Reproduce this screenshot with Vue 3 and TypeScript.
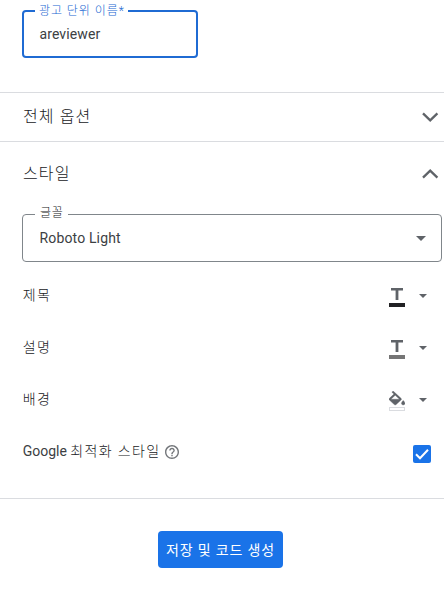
<script setup lang="ts">
import { ref } from 'vue'

interface StyleRow {
  label: string
  kind: 'text' | 'fill'
  color: string
  border: string
}

const unitName = ref('areviewer')
const fontName = ref('Roboto Light')
const optimized = ref(true)
const rows: StyleRow[] = [
  { label: '제목', kind: 'text', color: '#212124', border: '#212124' },
  { label: '설명', kind: 'text', color: '#757575', border: '#757575' },
  { label: '배경', kind: 'fill', color: '#ffffff', border: '#dadce0' },
]
</script>

<template>
  <main class="panel">
    <section class="name-section">
      <div class="field focused">
        <span class="legend"><span class="ko">광고 단위 이름</span><span class="star">*</span></span>
        <span class="value">{{ unitName }}</span>
      </div>
    </section>

    <section class="heading all">
      <h2>전체 옵션</h2>
      <svg class="chev" width="18" height="12" viewBox="0 0 18 12"><path d="M2 2.4 9.2 9.4 16.4 2.4" /></svg>
    </section>

    <section class="style">
      <div class="heading">
        <h2>스타일</h2>
        <svg class="chev" width="18" height="12" viewBox="0 0 18 12"><path d="M2 9.6 9.2 2.6 16.4 9.6" /></svg>
      </div>

      <div class="field select">
        <span class="legend ko">글꼴</span>
        <span class="value">{{ fontName }}</span>
        <svg width="10" height="5" viewBox="0 0 10 5"><path d="M0 0h10L5 5z" fill="#5f6368" /></svg>
      </div>

      <div v-for="row in rows" :key="row.label" class="row">
        <span class="label ko">{{ row.label }}</span>
        <span class="picker">
          <span class="swatch">
            <svg v-if="row.kind === 'text'" width="16" height="15" viewBox="0 0 16 15">
              <path d="M2 0h12v2.4H9.4V12H6.6V2.4H2z" fill="#5f6368" />
            </svg>
            <svg v-else width="16" height="16" viewBox="3 0 18 19.5" preserveAspectRatio="none">
              <path d="M16.56 8.94 7.62 0 6.21 1.41l2.38 2.38-5.15 5.15c-.59.59-.59 1.54 0 2.12l5.5 5.5c.29.29.68.44 1.06.44s.77-.15 1.06-.44l5.5-5.5c.59-.58.59-1.53 0-2.12zM5.21 10 10 5.21 14.79 10zM19 11.5s-2 2.17-2 3.5c0 1.1.9 2 2 2s2-.9 2-2c0-1.33-2-3.5-2-3.5z" fill="#5f6368" stroke="#5f6368" stroke-width=".4" />
            </svg>
            <i class="bar" :style="{ background: row.color, borderColor: row.border }"></i>
          </span>
          <svg width="8" height="4" viewBox="0 0 8 4"><path d="M0 0h8L4 4z" fill="#5f6368" /></svg>
        </span>
      </div>

      <div class="row optimized">
        <span class="label">Google <span class="ko">최적화 스타일</span></span>
        <svg class="help" width="14" height="14" viewBox="2 2 20 20">
          <path d="M11 18h2v-2h-2v2zm1-16C6.48 2 2 6.48 2 12s4.48 10 10 10 10-4.48 10-10S17.52 2 12 2zm0 18c-4.41 0-8-3.59-8-8s3.59-8 8-8 8 3.59 8 8-3.59 8-8 8zm0-14c-2.21 0-4 1.79-4 4h2c0-1.1.9-2 2-2s2 .9 2 2c0 2-3 1.75-3 5h2c0-2.25 3-2.5 3-5 0-2.21-1.79-4-4-4z" fill="#74777b" />
        </svg>
        <button class="check" role="checkbox" :aria-checked="optimized" @click="optimized = !optimized">
          <svg v-if="optimized" width="18" height="18" viewBox="0 0 18 18"><path d="M3 9.2 7 13.2 15 4.7" /></svg>
        </button>
      </div>
    </section>

    <footer>
      <button class="save">저장 및 코드 생성</button>
    </footer>
  </main>
</template>

<style>
body {
  background: #fff;
}
</style>

<style scoped>
.panel {
  width: 444px;
  height: 591px;
  overflow: hidden;
  box-sizing: border-box;
  font-family: Roboto, "Noto Sans CJK KR", sans-serif;
  font-size: 14px;
  color: #3c4043;
}
.ko {
  font-weight: 300;
  letter-spacing: 1.35px;
  color: #202124;
}
.name-section {
  box-sizing: border-box;
  height: 92px;
  padding: 10px 22px 0;
}
.field {
  position: relative;
  box-sizing: border-box;
  display: flex;
  align-items: center;
  height: 48px;
  border: 1px solid #80868b;
  border-radius: 4px;
  padding: 0 15px 0 16px;
}
.focused {
  width: 176px;
  border: 2px solid #1f6bd3;
  padding-left: 15px;
}
.value {
  flex: 1;
  line-height: 20px;
  padding-left: 0.5px;
  letter-spacing: 0.1px;
}
.select .value {
  letter-spacing: 0.15px;
}
.legend {
  position: absolute;
  left: 12px;
  top: -10px;
  padding: 0 4px 0 5px;
  background: #fff;
  font-size: 12px;
  line-height: 16px;
  letter-spacing: 0.8px;
  white-space: nowrap;
}
.legend .ko {
  letter-spacing: 0.95px;
  color: inherit;
}
.star {
  font-weight: 300;
}
.focused .legend {
  left: 11px;
  top: -9px;
  padding: 0 3px 0 4px;
  color: #1967d2;
}
.heading {
  box-sizing: border-box;
  display: flex;
  justify-content: space-between;
  align-items: center;
  padding: 0 5px 0 23px;
  height: 48px;
}
.heading.all {
  height: 50px;
  border-top: 1px solid #dadce0;
  border-bottom: 1px solid #dadce0;
}
h2 {
  margin: 0;
  font-size: 16px;
  line-height: 24px;
  font-weight: 300;
  letter-spacing: 1.1px;
  color: #202124;
}
.chev {
  fill: none;
  stroke: #5f6368;
  stroke-width: 2.3;
}
.style {
  box-sizing: border-box;
  height: 357px;
  padding-top: 8px;
  border-bottom: 1px solid #dadce0;
}
.select {
  margin: 16px 2px 8px 22px;
}
.row {
  display: flex;
  align-items: center;
  justify-content: space-between;
  height: 52px;
  padding: 0 17px 0 22.7px;
}
.label {
  line-height: 20px;
  padding-bottom: 2px;
}
.picker {
  display: flex;
  align-items: center;
  gap: 14px;
}
.swatch {
  display: flex;
  flex-direction: column;
  justify-content: flex-end;
  height: 20px;
  margin-top: 2px;
}
.swatch svg {
  display: block;
}
.bar {
  box-sizing: border-box;
  width: 16px;
  height: 4px;
  border: 1px solid;
}
.optimized {
  justify-content: flex-start;
  padding-right: 13px;
}
.help {
  margin-left: 4.5px;
}
.check {
  margin: 4px 0 0 auto;
  padding: 0;
  width: 18px;
  height: 18px;
  border: 0;
  border-radius: 2px;
  background: #1a73e8;
}
.check svg {
  display: block;
  fill: none;
  stroke: #fff;
  stroke-width: 2;
}
footer {
  display: flex;
  justify-content: center;
  padding: 32px 3px 0 0;
}
.save {
  width: 125px;
  height: 37px;
  padding: 0;
  border: 0;
  border-radius: 4px;
  background: #1a73e8;
  color: #fff;
  font: 400 14px/20px Roboto, "Noto Sans CJK KR", sans-serif;
  letter-spacing: 0.84px;
  white-space: nowrap;
}
</style>
